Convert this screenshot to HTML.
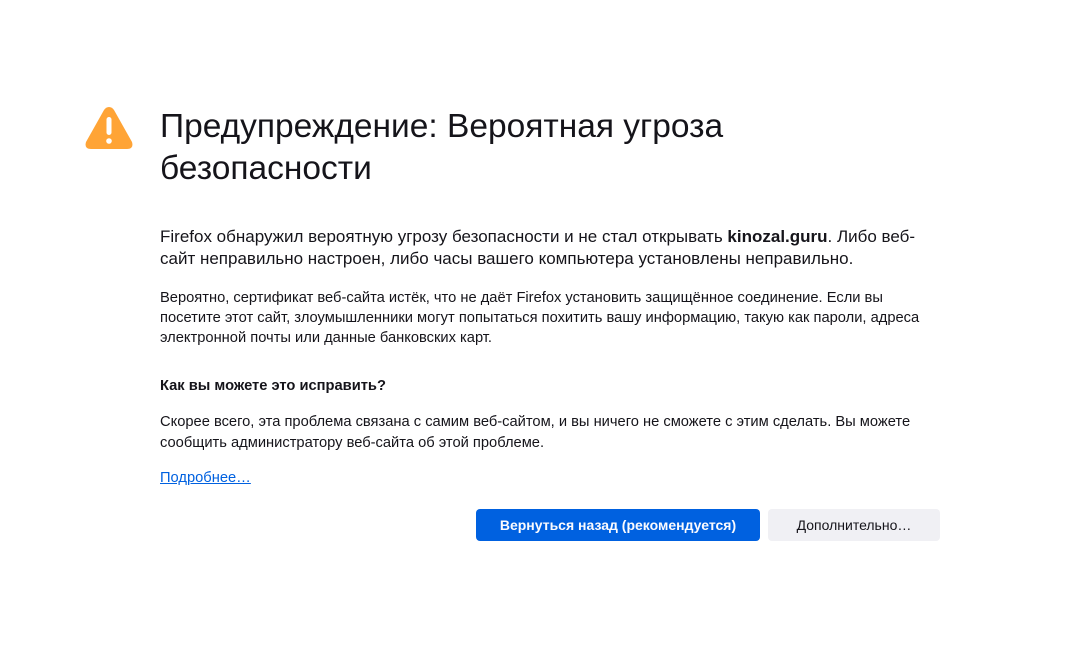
<!DOCTYPE html>
<html><head><meta charset="utf-8"><style>
html,body{margin:0;padding:0;background:#fff;width:1071px;height:671px;overflow:hidden;font-family:"Liberation Sans","DejaVu Sans",sans-serif;color:#15141a}
.l{position:absolute;left:160px;white-space:nowrap}
.t{font-size:33.5px;line-height:42px}
.p{font-size:17px}
.s{font-size:14.7px}
a{color:#0061e0}
.btn{position:absolute;top:509px;height:32px;border-radius:4px;font-size:14px;font-weight:bold;display:flex;align-items:center;justify-content:center}
</style></head><body>
<svg style="position:absolute;left:84px;top:104px" width="50" height="48" viewBox="0 0 50 48">
<path d="M25 3 Q28 3 30 6 L48 38 Q50 45 43 45 L7 45 Q0 45 2 38 L20 6 Q22 3 25 3Z" fill="#ffa436"/>
<rect x="22.5" y="13" width="5" height="18" rx="2.5" fill="#fff"/>
<circle cx="25" cy="37" r="2.8" fill="#fff"/>
</svg>
<div class="l t" style="top:106px">Предупреждение: Вероятная угроза</div>
<div class="l t" style="top:148px">безопасности</div>
<div class="l p" style="top:227px">Firefox обнаружил вероятную угрозу безопасности и не стал открывать <b>kinozal.guru</b>. Либо веб-</div>
<div class="l p" style="top:249px">сайт неправильно настроен, либо часы вашего компьютера установлены неправильно.</div>
<div class="l s" style="top:290px">Вероятно, сертификат веб-сайта истёк, что не даёт Firefox установить защищённое соединение. Если вы</div>
<div class="l s" style="top:310px">посетите этот сайт, злоумышленники могут попытаться похитить вашу информацию, такую как пароли, адреса</div>
<div class="l s" style="top:330px">электронной почты или данные банковских карт.</div>
<div class="l s" style="top:378px;font-weight:bold">Как вы можете это исправить?</div>
<div class="l s" style="top:414px">Скорее всего, эта проблема связана с самим веб-сайтом, и вы ничего не сможете с этим сделать. Вы можете</div>
<div class="l s" style="top:435px">сообщить администратору веб-сайта об этой проблеме.</div>
<div class="l s" style="top:470px"><a href="#">Подробнее…</a></div>
<div class="btn" style="left:476px;width:284px;background:#0061e0;color:#fbfbfe">Вернуться назад (рекомендуется)</div>
<div class="btn" style="left:768px;width:172px;background:#f0f0f4;color:#15141a;font-weight:normal">Дополнительно…</div>
</body></html>
